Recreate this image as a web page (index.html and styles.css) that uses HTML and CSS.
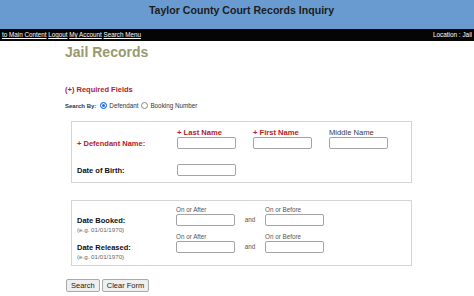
FILE: index.html
```html
<!DOCTYPE html>
<html lang="en">
<head>
<meta charset="utf-8">
<title>Taylor County Court Records Inquiry</title>
<link rel="stylesheet" href="styles.css">
</head>
<body>
<header class="banner">
  <div class="banner-title">Taylor County Court Records Inquiry</div>
</header>
<nav class="navbar">
  <div class="nav-links">
    <a href="#main" class="skip">to Main Content</a> <a href="#">Logout</a> <a href="#">My Account</a> <a href="#">Search Menu</a>
  </div>
  <div class="nav-location">Location : Jail</div>
</nav>
<main class="page" id="main">
  <h1 class="page-title">Jail Records</h1>
  <div class="required-note">(+) Required Fields</div>
  <div class="search-by">
    <span class="search-by-label">Search By:</span>
    <input type="radio" class="radio" name="by" checked id="r1"><label for="r1" class="radio-label">Defendant</label>
    <input type="radio" class="radio radio-2" name="by" id="r2"><label for="r2" class="radio-label">Booking Number</label>
  </div>

  <fieldset class="box box-name">
    <div class="name-label req cell-def">+ Defendant Name:</div>
    <div class="col-label req cell-l1">+ Last Name</div>
    <div class="col-label req cell-l2">+ First Name</div>
    <div class="col-label plain cell-l3">Middle Name</div>
    <input type="text" class="field cell-i1">
    <input type="text" class="field cell-i2">
    <input type="text" class="field cell-i3">
    <div class="name-label cell-dob">Date of Birth:</div>
    <input type="text" class="field cell-dobi">
  </fieldset>

  <fieldset class="box box-dates">
    <div class="small-label r1 c2">On or After</div>
    <div class="small-label r1 c4">On or Before</div>
    <div class="name-label r2 c1 mid">Date Booked:</div>
    <input type="text" class="field r2 c2">
    <div class="and r2 c3">and</div>
    <input type="text" class="field r2 c4">
    <div class="hint r3 c1">(e.g. 01/01/1970)</div>

    <div class="small-label r4 c2">On or After</div>
    <div class="small-label r4 c4">On or Before</div>
    <div class="name-label r5 c1 mid">Date Released:</div>
    <input type="text" class="field r5 c2">
    <div class="and r5 c3">and</div>
    <input type="text" class="field r5 c4">
    <div class="hint r6 c1">(e.g. 01/01/1970)</div>
  </fieldset>

  <div class="actions">
    <button type="submit" class="btn">Search</button>
    <button type="reset" class="btn">Clear Form</button>
  </div>
</main>
</body>
</html>
```
FILE: styles.css
```css
html, body {
  margin: 0;
  padding: 0;
  background: #ffffff;
}
body {
  font-family: "Liberation Sans", Arial, sans-serif;
  color: #111;
  overflow: hidden;
}

.banner {
  height: 29px;
  box-sizing: border-box;
  background: #6a9bd0;
  padding: 4px 0 0 9px;
  text-align: center;
}
.banner-title {
  font-size: 10.6px;
  line-height: 12px;
  font-weight: bold;
  color: #1c1c1c;
}

.navbar {
  height: 12px;
  background: #050505;
  display: flex;
  justify-content: space-between;
  align-items: center;
  overflow: hidden;
  font-size: 6.3px;
  line-height: 8px;
  color: #fff;
}
.nav-links {
  white-space: nowrap;
  padding-left: 2px;
}
.nav-links a {
  color: #fff;
  text-decoration: underline;
}
.nav-location {
  white-space: nowrap;
  padding-right: 2px;
  font-size: 6.4px;
}

.page {
  padding-left: 65px;
}
.page-title {
  margin: 3px 0 0 0;
  font-size: 14px;
  line-height: 16px;
  font-weight: bold;
  color: #999970;
}
.required-note {
  margin-top: 25px;
  font-size: 7.5px;
  line-height: 9px;
  font-weight: bold;
  color: #b5202a;
}

.search-by {
  margin-top: 7px;
  height: 9px;
  display: flex;
  align-items: center;
  font-size: 6.3px;
  color: #333;
}
.search-by-label {
  font-weight: bold;
  font-size: 6px;
}
.radio {
  appearance: none;
  -webkit-appearance: none;
  width: 7px;
  height: 7px;
  margin: 0 0 0 4px;
  box-sizing: border-box;
  border: 1px solid #8a8a8a;
  border-radius: 50%;
  background: #fff;
}
.radio:checked {
  border-color: #1a73e8;
  background: #1a73e8;
  box-shadow: inset 0 0 0 1px #fff;
}
.radio-2 {
  margin-left: 3px;
}
.radio-label {
  margin-left: 2px;
}

.box {
  margin: 0 0 0 6px;
  width: 341px;
  box-sizing: border-box;
  border: 1px solid #d4d4d4;
  min-width: 0;
}
.box-name {
  margin-top: 11px;
  padding: 6px 0 6px 5px;
  display: grid;
  grid-template-columns: 100px 76px 76px 76px;
  grid-template-rows: 9px 12px 15px 12px;
}
.name-label {
  font-size: 7.5px;
  line-height: 9px;
  font-weight: bold;
  color: #111;
  align-self: center;
  white-space: nowrap;
}
.req {
  color: #b5202a;
}
.col-label {
  font-size: 7.6px;
  line-height: 9px;
  font-weight: bold;
  white-space: nowrap;
}
.col-label.plain {
  font-weight: normal;
  color: #3a3a3a;
}
.cell-def { grid-column: 1; grid-row: 2; }
.cell-l1 { grid-column: 2; grid-row: 1; }
.cell-l2 { grid-column: 3; grid-row: 1; }
.cell-l3 { grid-column: 4; grid-row: 1; }
.cell-i1 { grid-column: 2; grid-row: 2; }
.cell-i2 { grid-column: 3; grid-row: 2; }
.cell-i3 { grid-column: 4; grid-row: 2; }
.cell-dob { grid-column: 1; grid-row: 4; }
.cell-dobi { grid-column: 2; grid-row: 4; }

.field {
  width: 59px;
  height: 12px;
  margin: 0;
  padding: 0;
  box-sizing: border-box;
  border: 1px solid #a3a3a3;
  border-radius: 2px;
  background: #fff;
}

.box-dates {
  margin-top: 17px;
  padding: 5px 0 5px 5px;
  display: grid;
  grid-template-columns: 99px 59px 30px 59px;
  grid-template-rows: 8px 12px 7px 8px 12px 7px;
}
.small-label {
  font-size: 6.3px;
  line-height: 8px;
  color: #555;
  white-space: nowrap;
}
.and {
  font-size: 6.3px;
  line-height: 8px;
  color: #555;
  text-align: center;
  align-self: center;
}
.hint {
  font-size: 6.2px;
  line-height: 7px;
  color: #666;
  white-space: nowrap;
  align-self: center;
}
.r1 { grid-row: 1; }
.r2 { grid-row: 2; }
.r3 { grid-row: 3; }
.r4 { grid-row: 4; }
.r5 { grid-row: 5; }
.r6 { grid-row: 6; }
.c1 { grid-column: 1; }
.c2 { grid-column: 2; }
.c3 { grid-column: 3; }
.c4 { grid-column: 4; }

.actions {
  margin-top: 13px;
  padding-left: 1px;
  display: flex;
  gap: 2px;
}
.btn {
  height: 13px;
  margin: 0;
  padding: 0 4px;
  box-sizing: border-box;
  font-family: "Liberation Sans", Arial, sans-serif;
  font-size: 7.5px;
  line-height: 11px;
  color: #222;
  background: #efefef;
  border: 1px solid #a9a9a9;
  border-radius: 2px;
}
```
